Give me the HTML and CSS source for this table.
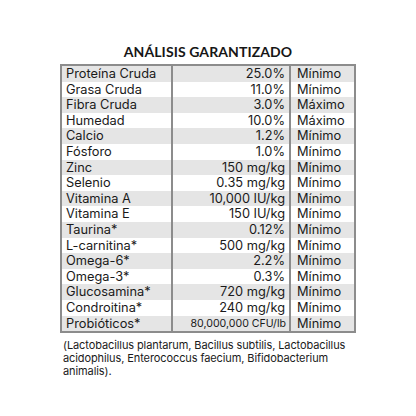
FILE: index.html
```html
<!DOCTYPE html>
<html lang="es">
<head>
  <meta charset="UTF-8" />
  <title>Análisis Garantizado</title>
  <link rel="stylesheet" href="styles.css">
</head>
<body>
  <div class="panel">
    <h1 class="title">ANÁLISIS GARANTIZADO</h1>

    <table class="analysis">
      <tr><td>Proteína Cruda</td><td class="num">25.0%</td><td>Mínimo</td></tr>
      <tr><td>Grasa Cruda</td><td class="num">11.0%</td><td>Mínimo</td></tr>
      <tr><td>Fibra Cruda</td><td class="num">3.0%</td><td>Máximo</td></tr>
      <tr><td>Humedad</td><td class="num">10.0%</td><td>Máximo</td></tr>
      <tr><td>Calcio</td><td class="num">1.2%</td><td>Mínimo</td></tr>
      <tr><td>Fósforo</td><td class="num">1.0%</td><td>Mínimo</td></tr>
      <tr><td>Zinc</td><td class="num">150 mg/kg</td><td>Mínimo</td></tr>
      <tr><td>Selenio</td><td class="num">0.35 mg/kg</td><td>Mínimo</td></tr>
      <tr><td>Vitamina A</td><td class="num">10,000 IU/kg</td><td>Mínimo</td></tr>
      <tr><td>Vitamina E</td><td class="num">150 IU/kg</td><td>Mínimo</td></tr>
      <tr><td>Taurina*</td><td class="num">0.12%</td><td>Mínimo</td></tr>
      <tr><td>L-carnitina*</td><td class="num">500 mg/kg</td><td>Mínimo</td></tr>
      <tr><td>Omega-6*</td><td class="num">2.2%</td><td>Mínimo</td></tr>
      <tr><td>Omega-3*</td><td class="num">0.3%</td><td>Mínimo</td></tr>
      <tr><td>Glucosamina*</td><td class="num">720 mg/kg</td><td>Mínimo</td></tr>
      <tr><td>Condroitina*</td><td class="num">240 mg/kg</td><td>Mínimo</td></tr>
      <tr><td>Probióticos*</td><td class="num small">80,000,000 CFU/lb</td><td>Mínimo</td></tr>
    </table>

    <p class="note">(Lactobacillus plantarum, Bacillus subtilis, Lactobacillus acidophilus, Enterococcus faecium, Bifidobacterium animalis).</p>
  </div>
</body>
</html>
```

FILE: styles.css
```css
* {
  margin: 0;
  padding: 0;
  box-sizing: border-box;
}

body {
  width: 416px;
  height: 416px;
  background: #fff;
  font-family: 'Inter', 'Open Sans', sans-serif;
  color: #1a1a1a;
}

.panel {
  width: 296px;
  margin: 0 auto;
  padding-top: 42px;
}

.title {
  font-family: 'Lato', sans-serif;
  font-size: 14px;
  font-weight: 700;
  text-align: center;
  letter-spacing: 0.1px;
  line-height: 20px;
  margin-bottom: 2px;
  color: #161616;
}

.analysis {
  width: 296px;
  border-collapse: collapse;
  border: 2px solid #8c8c8c;
  font-size: 12.8px;
  line-height: 15.6px;
}

.analysis td {
  padding: 0 4px;
  white-space: nowrap;
  border-left: 2px solid #8c8c8c;
}

.analysis td:first-child {
  width: 111px;
  border-left: none;
}

.analysis td:nth-child(2) {
  width: 118px;
}

.analysis td:last-child {
  padding-left: 6px;
}

.analysis tr:nth-child(odd) {
  background: #e5e5e5;
}

.num {
  text-align: right;
}

.small {
  font-size: 10.6px;
  padding-right: 3px !important;
}

.note {
  margin-top: 6px;
  padding-left: 3px;
  font-size: 11px;
  line-height: 13px;
  letter-spacing: -0.1px;
  color: #1a1a1a;
}
```
